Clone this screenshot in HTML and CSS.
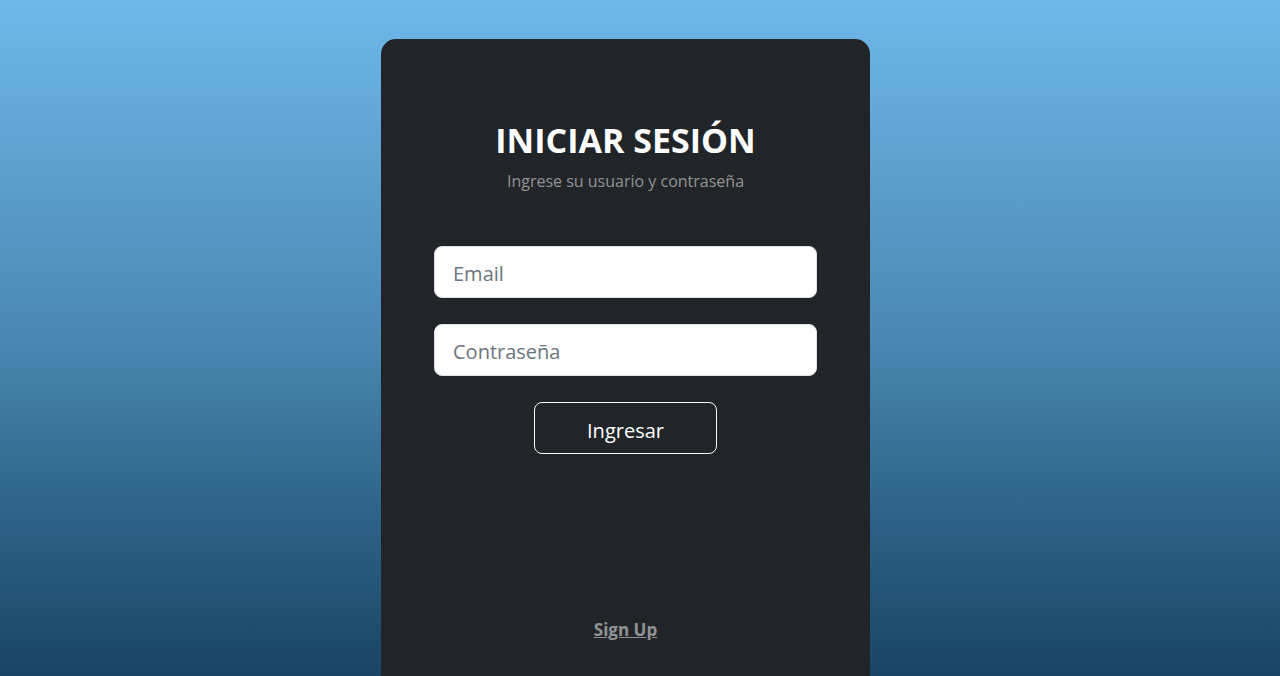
FILE: index.html
```html
<!DOCTYPE html>
<html lang="es">
<head>
<meta charset="utf-8">
<title>Iniciar sesión</title>
<link rel="stylesheet" href="styles.css">
</head>
<body>
<main class="page">
  <section class="card">
    <h2 class="title">INICIAR SESIÓN</h2>
    <p class="subtitle">Ingrese su usuario y contraseña</p>
    <form class="form">
      <input class="field" type="email" placeholder="Email">
      <input class="field" type="password" placeholder="Contraseña">
      <button class="btn" type="button">Ingresar</button>
    </form>
    <p class="footer"><a class="signup" href="#">Sign Up</a></p>
  </section>
</main>
</body>
</html>
```
FILE: styles.css
```css
html, body {
  margin: 0;
  padding: 0;
  height: 100%;
  overflow: hidden;
}
body {
  font-family: "Open Sans", "Noto Sans", sans-serif;
  background: linear-gradient(to bottom, #6fb8ea 0%, #4a88b2 50%, #2e6489 75%, #1a4463 100%);
}
.page {
  display: flex;
  justify-content: center;
  padding: 39px 29px 0 0;
}
.card {
  width: 489px;
  height: 700px;
  flex-shrink: 0;
  box-sizing: border-box;
  background: #212529;
  border-radius: 15px;
  padding: 0 53px;
  display: flex;
  flex-direction: column;
  align-items: center;
  color: #fff;
}
.title {
  margin: 81px 0 0;
  font-size: 34px;
  font-weight: 700;
  line-height: 40px;
  letter-spacing: 0;
}
.subtitle {
  margin: 9px 0 0;
  font-size: 16px;
  line-height: 24px;
  color: rgba(255, 255, 255, 0.5);
}
.form {
  margin-top: 53px;
  width: 100%;
  display: flex;
  flex-direction: column;
  align-items: center;
  gap: 26px;
}
.field {
  width: 100%;
  height: 52px;
  box-sizing: border-box;
  border: 1px solid #dee2e6;
  border-radius: 8px;
  background: #fff;
  padding: 3px 18px 0;
  font-family: inherit;
  font-size: 20px;
  color: #212529;
  outline: none;
}
.field::placeholder {
  color: #6c757d;
}
.btn {
  width: 183px;
  height: 52px;
  box-sizing: border-box;
  border: 1px solid #f8f9fa;
  border-radius: 8px;
  background: transparent;
  color: #fff;
  padding: 4px 0 0;
  font-family: inherit;
  font-size: 20px;
  cursor: pointer;
}
.footer {
  margin: 164px 0 0;
}
.signup {
  color: rgba(255, 255, 255, 0.5);
  font-weight: 700;
  font-size: 17px;
  text-decoration: underline;
}
```
